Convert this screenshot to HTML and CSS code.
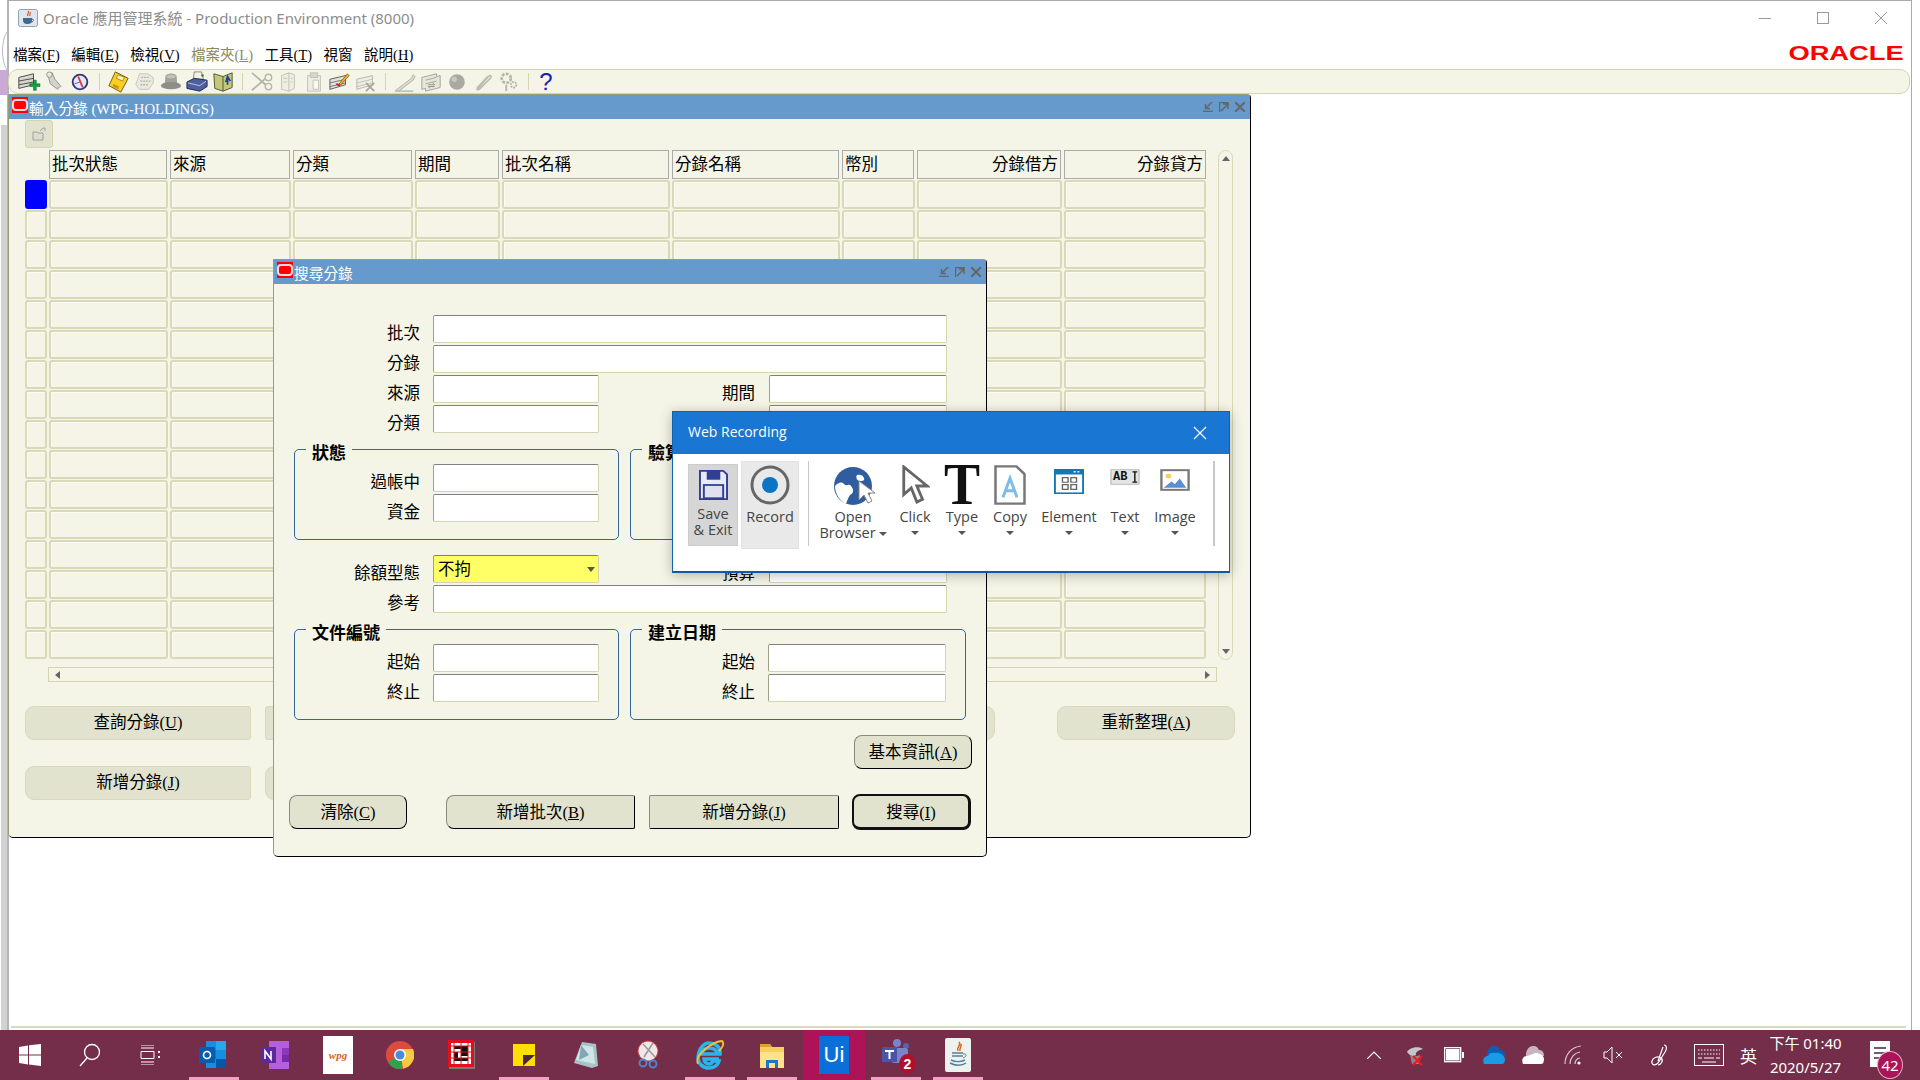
FILE: index.html
```html
<!DOCTYPE html>
<html lang="zh-Hant">
<head>
    <meta charset="UTF-8">
    <title>Oracle 應用管理系統 - Production Environment (8000)</title>
    <link rel="stylesheet" href="styles.css">
</head>
<body>
    <!-- sliver of whatever is behind the frame -->
    <svg class="behind" width="7" height="1030" viewBox="0 0 7 1030">
        <path d="M7 32C1 40 1 62 7 70" fill="none" stroke="#bbb"/>
        <rect y="70" width="7" height="25" fill="#c9aad6"/>
        <rect x="1" y="125" width="6" height="905" fill="#d2d2d2"/>
    </svg>

    <div class="app">
        <!-- Java frame -->
        <div class="app-title">
            <svg class="java-icon" width="20" height="18" viewBox="0 0 20 18">
                <rect x="0.5" y="0.5" width="19" height="17" rx="2" fill="#dfe6ee" stroke="#8fa3b5"/>
                <path d="M10 2c2 2-2 3 0 5M12 3c1 2-1 2 0 4" fill="none" stroke="#d9531e" stroke-width="1.2"/>
                <path d="M5 9h9v2c0 3-2 4-4.500 4S5 14 5 11z" fill="#3f6a8c"/>
                <path d="M14 10c2 0 2 3-1 3" fill="none" stroke="#3f6a8c"/>
            </svg>
            <span class="app-name">Oracle 應用管理系統 - Production Environment (8000)</span>
            <div class="win-controls">
                <svg width="12" height="12" viewBox="0 0 12 12"><path d="M0 6.500h12" stroke="#999"/></svg>
                <svg width="12" height="12" viewBox="0 0 12 12"><rect x="0.500" y="0.500" width="11" height="11" fill="none" stroke="#999"/></svg>
                <svg width="12" height="12" viewBox="0 0 12 12"><path d="M0 0l12 12M12 0L0 12" stroke="#999"/></svg>
            </div>
        </div>

        <div class="menu-bar">
            <nav class="menu">
                <span>檔案(<u>F</u>)</span>
                <span>編輯(<u>E</u>)</span>
                <span>檢視(<u>V</u>)</span>
                <span class="menu-off">檔案夾(<u>L</u>)</span>
                <span>工具(<u>T</u>)</span>
                <span>視窗</span>
                <span>說明(<u>H</u>)</span>
            </nav>
            <span class="oracle-logo">ORACLE</span>
        </div>

        <div class="toolbar">
            <svg class="tool" viewBox="0 0 26 24"><path d="M3 7l16-4v12L3 19z" fill="#d8d8d0" stroke="#444"/><path d="M3 11l16-3M3 15l16-3" stroke="#444"/><path d="M15 14h4v-4h3v4h4v3h-4v4h-3v-4h-4z" fill="#12a23c" stroke="#0a5c22" stroke-width=".6"/></svg>
            <svg class="tool" viewBox="0 0 26 24"><path d="M6 3l5-1 3 7 6 7-3 4-8-6z" fill="#d3d3cb" stroke="#8e8e86"/><circle cx="8" cy="4" r="3" fill="#e8e8e0" stroke="#8e8e86"/><path d="M16 19l5-3" stroke="#c0c0b8" stroke-width="2"/></svg>
            <svg class="tool" viewBox="0 0 26 24"><circle cx="13" cy="12" r="8" fill="#e6e6f6" stroke="#34347c" stroke-width="2"/><path d="M11 6l5 12" stroke="#d63a3a" stroke-width="2"/><path d="M7 14l6-2" stroke="#3c6cc4"/></svg>
            <i class="tool-sep"></i>
            <svg class="tool" viewBox="0 0 26 24"><path d="M9 1l14 7-8 15L2 16z" fill="#f9cf26" stroke="#6b5200"/><path d="M12 4l7 3-2 4-7-3z" fill="#fff2b0" stroke="#6b5200" stroke-width=".6"/><path d="M7 14l6 3-1 3-6-3z" fill="#c79a10"/></svg>
            <svg class="tool" viewBox="0 0 26 24"><path d="M7 3h9l6 4v6l-5 7H7l-4-5z" fill="#e9e9df" stroke="#c4c4ba"/><path d="M9 7h8M8 11h11M8 15h9" stroke="#b2b2a8" stroke-width="1.500" stroke-dasharray="2 1"/></svg>
            <svg class="tool" viewBox="0 0 26 24"><path d="M7 5c2-3 10-3 12 0l1 11H6z" fill="#a3a39c"/><ellipse cx="13" cy="16" rx="11" ry="4" fill="#8e8e88"/><ellipse cx="13" cy="6" rx="5" ry="2" fill="#c2c2ba"/></svg>
            <svg class="tool" viewBox="0 0 26 24"><path d="M10 1h8l2 8H9z" fill="#f3f3ea" stroke="#55554d" stroke-width=".7"/><path d="M2 12l8-4 14 2v7l-8 5-14-3z" fill="#4f5f9e" stroke="#1d2550"/><path d="M3 13l13 3 7-5" fill="none" stroke="#c4cbe6"/><circle cx="19" cy="5" r="1.500" fill="#3c8c3c"/></svg>
            <svg class="tool" viewBox="0 0 26 24"><path d="M3 3l10 3 10-4v16l-10 4-9-3z" fill="#c4c874" stroke="#4e5030"/><path d="M13 6v16" stroke="#4e5030"/><path d="M16 12l2-6 3 5M18 7v8" fill="none" stroke="#1c3fa8" stroke-width="1.800"/></svg>
            <i class="tool-sep"></i>
            <svg class="tool" viewBox="0 0 26 24"><path d="M2 2l15 13M2 21L17 8" stroke="#b5b5ac" stroke-width="2"/><circle cx="20" cy="7" r="3.500" fill="none" stroke="#b5b5ac" stroke-width="1.500"/><circle cx="20" cy="17" r="3.500" fill="none" stroke="#b5b5ac" stroke-width="1.500"/></svg>
            <svg class="tool" viewBox="0 0 26 24"><path d="M6 5l8-3 6 2v15l-6 3-8-2z" fill="#eeeee3" stroke="#c0c0b6"/><path d="M14 2v20M8 8h4M8 12h4M16 8h2M16 12h2" stroke="#c0c0b6"/></svg>
            <svg class="tool" viewBox="0 0 26 24"><path d="M6 5h14v17H6z" fill="#eeeee3" stroke="#c0c0b6"/><rect x="9" y="2" width="8" height="5" fill="#d6d6cc" stroke="#c0c0b6"/><path d="M12 10h6v10h-6z" fill="#fafaf0" stroke="#c0c0b6"/></svg>
            <svg class="tool" viewBox="0 0 26 24"><path d="M2 9l17-4v10L2 20z" fill="#e2e2da" stroke="#555"/><path d="M2 13l17-4M2 17l17-4" stroke="#555" stroke-width=".8"/><path d="M12 14l9-11 2 2-9 10-3 1z" fill="#f4b024" stroke="#7d3a00" stroke-width=".7"/><path d="M9 14l4 2" stroke="#c42222" stroke-width="2"/></svg>
            <svg class="tool" viewBox="0 0 26 24"><path d="M3 9l17-4v10L3 20z" fill="#eeeee4" stroke="#b4b4aa"/><path d="M3 13l17-4M3 17l17-4" stroke="#b4b4aa" stroke-width=".8"/><path d="M13 13l9 9M22 13l-9 9" stroke="#a8a8a0" stroke-width="2"/></svg>
            <i class="tool-sep"></i>
            <svg class="tool" viewBox="0 0 26 24"><path d="M3 21l17-13 2-4 2 2-2 4L6 22z" fill="#dcdcd2" stroke="#aeaea4"/><path d="M2 22h20" stroke="#c2c2b8" stroke-width="2"/></svg>
            <svg class="tool" viewBox="0 0 26 24"><path d="M3 7l16-4v3l4-1v13L7 22v-3l-4 1z" fill="#e6e6dc" stroke="#a0a096"/><path d="M7 10l12-3M7 14l12-3" stroke="#a0a096"/><path d="M10 15h7l-2-2M17 17h-7l2 2" fill="none" stroke="#8c8c82"/></svg>
            <svg class="tool" viewBox="0 0 26 24"><circle cx="13" cy="12" r="8.500" fill="#a9a9a2"/><circle cx="10" cy="9" r="3" fill="#c9c9c2"/></svg>
            <svg class="tool" viewBox="0 0 26 24"><path d="M7 21L20 6c2-2 4 0 2 2L10 20c-2 1-3 0-2-2L19 6" transform="translate(-1 0)" fill="none" stroke="#bcbcb2" stroke-width="1.800"/></svg>
            <svg class="tool" viewBox="0 0 26 24"><circle cx="10" cy="8" r="5" fill="none" stroke="#b4b4aa" stroke-width="3" stroke-dasharray="3 1.500"/><circle cx="18" cy="15" r="3" fill="none" stroke="#b4b4aa" stroke-width="2" stroke-dasharray="2 1"/><path d="M10 15v7" stroke="#b4b4aa" stroke-width="2"/></svg>
            <i class="tool-sep"></i>
            <span class="tool help">?</span>
        </div>

        <div class="status-line"></div>
    </div>

    <!-- 輸入分錄 -->
    <section class="form-win journal-win">
        <header class="win-head">
            <span class="ora-icon"></span>
            <span class="win-title">輸入分錄 (WPG-HOLDINGS)</span>
            <div class="head-btns">
                <svg width="10" height="10" viewBox="0 0 10 10"><path d="M0 9.500h10M9 0L3 6M2.500 2v4.500H7" fill="none" stroke="#666" stroke-width="1.500"/></svg>
                <svg width="10" height="10" viewBox="0 0 10 10"><path d="M.5 10V.5H10M2 9l7-7M4 2h5v5" fill="none" stroke="#666" stroke-width="1.500"/></svg>
                <svg width="10" height="10" viewBox="0 0 10 10"><path d="M0 0l10 10M10 0L0 10" stroke="#666" stroke-width="2"/></svg>
            </div>
        </header>
        <div class="journal-body">
            <div class="folder-btn">
                <svg width="16" height="16" viewBox="0 0 16 16"><path d="M2 14V6h4l1 1h5v7zM9 5l3-3h2v3" fill="#ddddd0" stroke="#a2a298"/></svg>
            </div>
            <div class="table-wrap">
                <div class="tbl">
                    <div class="tbl-row tbl-head">
                        <b class="blank"></b><b>批次狀態</b><b>來源</b><b>分類</b><b>期間</b><b>批次名稱</b><b>分錄名稱</b><b>幣別</b><b class="num">分錄借方</b><b class="num">分錄貸方</b>
                    </div>
                    <div class="tbl-row"><i class="current"></i><i></i><i></i><i></i><i></i><i></i><i></i><i></i><i></i><i></i></div>
                    <div class="tbl-row"><i></i><i></i><i></i><i></i><i></i><i></i><i></i><i></i><i></i><i></i></div>
                    <div class="tbl-row"><i></i><i></i><i></i><i></i><i></i><i></i><i></i><i></i><i></i><i></i></div>
                    <div class="tbl-row"><i></i><i></i><i></i><i></i><i></i><i></i><i></i><i></i><i></i><i></i></div>
                    <div class="tbl-row"><i></i><i></i><i></i><i></i><i></i><i></i><i></i><i></i><i></i><i></i></div>
                    <div class="tbl-row"><i></i><i></i><i></i><i></i><i></i><i></i><i></i><i></i><i></i><i></i></div>
                    <div class="tbl-row"><i></i><i></i><i></i><i></i><i></i><i></i><i></i><i></i><i></i><i></i></div>
                    <div class="tbl-row"><i></i><i></i><i></i><i></i><i></i><i></i><i></i><i></i><i></i><i></i></div>
                    <div class="tbl-row"><i></i><i></i><i></i><i></i><i></i><i></i><i></i><i></i><i></i><i></i></div>
                    <div class="tbl-row"><i></i><i></i><i></i><i></i><i></i><i></i><i></i><i></i><i></i><i></i></div>
                    <div class="tbl-row"><i></i><i></i><i></i><i></i><i></i><i></i><i></i><i></i><i></i><i></i></div>
                    <div class="tbl-row"><i></i><i></i><i></i><i></i><i></i><i></i><i></i><i></i><i></i><i></i></div>
                    <div class="tbl-row"><i></i><i></i><i></i><i></i><i></i><i></i><i></i><i></i><i></i><i></i></div>
                    <div class="tbl-row"><i></i><i></i><i></i><i></i><i></i><i></i><i></i><i></i><i></i><i></i></div>
                    <div class="tbl-row"><i></i><i></i><i></i><i></i><i></i><i></i><i></i><i></i><i></i><i></i></div>
                    <div class="tbl-row"><i></i><i></i><i></i><i></i><i></i><i></i><i></i><i></i><i></i><i></i></div>
                </div>
                <div class="vscroll">
                    <span class="arrow-up"></span>
                    <span class="arrow-down"></span>
                </div>
            </div>
            <div class="hscroll">
                <span class="arrow-left"></span>
                <span class="arrow-right"></span>
            </div>
            <div class="journal-btns">
                <button class="flat-btn">查詢分錄(<u>U</u>)</button>
                <button class="flat-btn hidden-long"></button>
                <button class="flat-btn refresh">重新整理(<u>A</u>)</button>
            </div>
            <div class="journal-btns second">
                <button class="flat-btn">新增分錄(<u>J</u>)</button>
                <button class="flat-btn"></button>
            </div>
        </div>
    </section>

    <!-- 搜尋分錄 -->
    <section class="form-win find-win">
        <header class="win-head">
            <span class="ora-icon"></span>
            <span class="win-title">搜尋分錄</span>
            <div class="head-btns">
                <svg width="10" height="10" viewBox="0 0 10 10"><path d="M0 9.500h10M9 0L3 6M2.500 2v4.500H7" fill="none" stroke="#666" stroke-width="1.500"/></svg>
                <svg width="10" height="10" viewBox="0 0 10 10"><path d="M.5 10V.5H10M2 9l7-7M4 2h5v5" fill="none" stroke="#666" stroke-width="1.500"/></svg>
                <svg width="10" height="10" viewBox="0 0 10 10"><path d="M0 0l10 10M10 0L0 10" stroke="#666" stroke-width="2"/></svg>
            </div>
        </header>
        <div class="find-body">
            <div class="frow"><label>批次</label><span class="field long"></span></div>
            <div class="frow"><label>分錄</label><span class="field long"></span></div>
            <div class="frow"><label>來源</label><span class="field"></span><label class="right-lbl">期間</label><span class="field mid"></span></div>
            <div class="frow"><label>分類</label><span class="field"></span><label class="right-lbl"></label><span class="field mid"></span></div>

            <div class="groups">
                <div class="group group-l">
                    <span class="legend">狀態</span>
                    <div class="frow"><label>過帳中</label><span class="field"></span></div>
                    <div class="frow"><label>資金</label><span class="field"></span></div>
                </div>
                <div class="group group-r">
                    <span class="legend">驗算</span>
                </div>
            </div>

            <div class="frow">
                <label>餘額型態</label>
                <span class="field pick">不拘<em class="pick-arrow"></em></span>
                <label class="right-lbl">預算</label><span class="field mid"></span>
            </div>
            <div class="frow"><label>參考</label><span class="field long"></span></div>

            <div class="groups lower">
                <div class="group group-l">
                    <span class="legend">文件編號</span>
                    <div class="frow"><label>起始</label><span class="field"></span></div>
                    <div class="frow"><label>終止</label><span class="field"></span></div>
                </div>
                <div class="group group-r">
                    <span class="legend">建立日期</span>
                    <div class="frow"><label>起始</label><span class="field mid"></span></div>
                    <div class="frow"><label>終止</label><span class="field mid"></span></div>
                </div>
            </div>

            <div class="btn-line end">
                <button class="form-btn info-btn">基本資訊(<u>A</u>)</button>
            </div>
            <div class="btn-line actions">
                <button class="form-btn clear-btn">清除(<u>C</u>)</button>
                <button class="form-btn new-btn">新增批次(<u>B</u>)</button>
                <button class="form-btn new-btn entry">新增分錄(<u>J</u>)</button>
                <button class="form-btn find-btn">搜尋(<u>I</u>)</button>
            </div>
        </div>
    </section>

    <!-- UiPath recorder -->
    <section class="recorder">
        <header class="rec-head">
            <span class="rec-title">Web Recording</span>
            <svg width="14" height="14" viewBox="0 0 14 14"><path d="M1 1l12 12M13 1L1 13" stroke="#fff" stroke-width="1.200"/></svg>
        </header>
        <div class="rec-body">
            <div class="rec-btn save">
                <svg width="29" height="30" viewBox="0 0 30 34" preserveAspectRatio="none"><path d="M1 1h24l4 4v28H1z" fill="#e8eaf4" stroke="#2f3f94" stroke-width="2"/><rect x="8" y="1" width="14" height="10" fill="#2f3f94"/><rect x="5" y="17" width="20" height="15" fill="#dfe2ee" stroke="#2f3f94" stroke-width="2"/></svg>
                <span>Save<br>&amp; Exit</span>
            </div>
            <div class="rec-btn record">
                <svg width="40" height="40" viewBox="0 0 40 40"><circle cx="20" cy="20" r="18" fill="none" stroke="#666" stroke-width="3"/><circle cx="20" cy="20" r="8" fill="#0b74c4"/></svg>
                <span>Record</span>
            </div>
            <i class="rec-sep"></i>
            <div class="rec-item open">
                <svg width="44" height="42" viewBox="0 0 44 42"><circle cx="20" cy="21" r="19" fill="#2f5d9f"/><path d="M2 21c3-3 6-5 9-2s4-1 7 2 3 7-1 9c-2 3-3 6-4 9-6-3-11-10-11-18zM24 10c3-1 6 0 7 3s-2 3-4 3-5-3-3-6z" fill="#fff"/><path d="M26 16v19l5-5 4 8 4-2-4-8h7z" fill="#fff" stroke="#888"/></svg>
                <span>Open<br>Browser<em class="inline-caret"></em></span>
            </div>
            <div class="rec-item click">
                <svg width="30" height="40" viewBox="0 0 32 42" preserveAspectRatio="none"><path d="M4 2v29l8-7 6 15 6-3-6-14h11z" fill="#fff" stroke="#666" stroke-width="3"/></svg>
                <span>Click</span><em class="caret"></em>
            </div>
            <div class="rec-item type">
                <span class="big-t">T</span>
                <span>Type</span><em class="caret"></em>
            </div>
            <div class="rec-item copy">
                <svg width="32" height="40" viewBox="0 0 32 42" preserveAspectRatio="none"><path d="M1.500 1.500h21l8 8v31h-29z" fill="#fff" stroke="#777" stroke-width="2.500"/><path d="M9 34l7-20 7 20M11.500 27h9" fill="none" stroke="#7cbce6" stroke-width="3"/></svg>
                <span>Copy</span><em class="caret"></em>
            </div>
            <div class="rec-item element">
                <svg width="30" height="25" viewBox="0 0 32 32" preserveAspectRatio="none"><rect width="32" height="32" fill="#1277b8"/><rect x="2" y="7" width="28" height="23" fill="#fff"/><path d="M21 3.500h2M25 3.500h2" stroke="#fff" stroke-width="2"/><path d="M9 11h6v6H9zM18 11h6v6h-6zM9 20h6v6H9zM18 20h6v6h-6z" fill="none" stroke="#666" stroke-width="1.500"/></svg>
                <span>Element</span><em class="caret"></em>
            </div>
            <div class="rec-item text-item">
                <svg width="30" height="16" viewBox="0 0 32 22" preserveAspectRatio="none"><rect x="1" y="1" width="30" height="20" fill="#e4e4e4" stroke="#aaa"/><path d="M24 4h5M24 18h5M26.500 4v14" stroke="#111" stroke-width="1.500"/></svg>
                <span class="ab-label">AB</span>
                <span>Text</span><em class="caret"></em>
            </div>
            <div class="rec-item image-item">
                <svg width="30" height="22" viewBox="0 0 32 28" preserveAspectRatio="none"><rect x="1.500" y="1.500" width="29" height="25" fill="#fff" stroke="#777" stroke-width="2.500"/><circle cx="9" cy="9" r="3" fill="#f0d060"/><path d="M4 24l8-8 4 3 5-7 7 12z" fill="#5b8fcf"/></svg>
                <span>Image</span><em class="caret"></em>
            </div>
            <i class="rec-sep last"></i>
        </div>
    </section>

    <footer class="taskbar">
        <div class="task-apps">
            <span class="task-slot sys"><svg width="22" height="22" viewBox="0 0 22 22"><path d="M0 3l9-1.500v9H0zM10 1.300L22 0v10.500H10zM0 11.500h9v9L0 19zM10 11.500h12V22l-12-1.500z" fill="#fff"/></svg></span>
            <span class="task-slot sys"><svg width="22" height="24" viewBox="0 0 22 24"><circle cx="13" cy="9" r="7.500" fill="none" stroke="#fff" stroke-width="1.300"/><path d="M8 15L1 23" stroke="#fff" stroke-width="1.300"/></svg></span>
            <span class="task-slot sys"><svg width="20" height="20" viewBox="0 0 20 20"><path d="M1 0h13M1 3h13M1 6.500h13v7H1zM1 17h13M1 20h13" fill="none" stroke="#fff"/><path d="M18 6h2v2h-2zM18 11h2v2h-2z" fill="#fff"/></svg></span>
            <span class="task-slot on app-gap"><svg width="30" height="30" viewBox="0 0 30 30"><rect x="7" y="1" width="20" height="27" fill="#1490df"/><rect x="17" y="1" width="10" height="9" fill="#28a8ea"/><rect x="7" y="10" width="10" height="9" fill="#0078d4"/><rect x="17" y="19" width="10" height="9" fill="#0358a7"/><rect x="0" y="7" width="16" height="16" rx="1" fill="#0a5ab0"/><circle cx="8" cy="15" r="3.500" fill="none" stroke="#fff" stroke-width="1.600"/></svg></span>
            <span class="task-slot"><svg width="30" height="30" viewBox="0 0 30 30"><rect x="8" y="1" width="20" height="28" fill="#b65fdc"/><rect x="21" y="8" width="7" height="7" fill="#8a39b8"/><rect x="21" y="15" width="7" height="7" fill="#7a2aa8"/><rect x="0" y="7" width="15" height="16" fill="#5b2aa0"/><path d="M4 19v-8l6 8v-8" fill="none" stroke="#fff" stroke-width="1.600"/></svg></span>
            <span class="task-slot"><span class="wpg-logo">wpg</span></span>
            <span class="task-slot"><svg width="28" height="28" viewBox="0 0 28 28"><circle cx="14" cy="14" r="14" fill="#dd4b3e"/><path d="M14 14L2 21a14 14 0 0 0 14 7z" fill="#2fa24f"/><path d="M14 8h13a14 14 0 0 1-10 19.700z" fill="#f7c93e"/><circle cx="14" cy="14" r="6" fill="#fff"/><circle cx="14" cy="14" r="4.500" fill="#4a89dc"/></svg></span>
            <span class="task-slot"><svg width="28" height="30" viewBox="0 0 28 30"><rect x="1" y="2" width="26" height="27" fill="#7a7a7a"/><rect width="26" height="27" fill="#e0101c"/><path d="M3 3h20v21H3z" fill="#fff"/><path d="M6 6h14v3H6zM13 9h7v7h-7zM6 12h4v9H6zM10 18h10v3H10z" fill="#111"/><path d="M0 6h26M0 12h26M0 18h26M6 0v27M13 0v27M20 0v27" stroke="#e0101c"/></svg></span>
            <span class="task-slot on"><svg width="24" height="26" viewBox="0 0 24 26"><path d="M1 2h22v22H1z" fill="#ffdf00"/><path d="M11 24V13h12z" fill="#4a2640"/></svg></span>
            <span class="task-slot"><svg width="28" height="30" viewBox="0 0 28 30"><path d="M10 2l14 2 2 22-6 2L2 23z" fill="#a6c4c8"/><path d="M9 5l12 2 2 17L4 20z" fill="#d0e6e6"/><path d="M9 5l8 10-10 5z" fill="#7fa8b4"/></svg></span>
            <span class="task-slot"><svg width="30" height="30" viewBox="0 0 30 30"><ellipse cx="15" cy="11" rx="10" ry="10" transform="rotate(30 15 11)" fill="#f3e6e6" stroke="#c23a3a"/><path d="M10 4l12 13M20 3L11 17" stroke="#999" stroke-width="1.500"/><circle cx="10" cy="23" r="3.500" fill="none" stroke="#4c86c8" stroke-width="2"/><circle cx="20" cy="24" r="3.500" fill="none" stroke="#4c86c8" stroke-width="2"/></svg></span>
            <span class="task-slot on"><svg width="30" height="30" viewBox="0 0 30 30"><path d="M6 14a9 9 0 0 1 17 0zM3 14h22c1-8-6-11-11-11S4 8 3 17c0 7 5 11 11 11 5 0 9-3 10-7h-6c-1 2-2 3-4 3s-5-2-5-5h15" fill="none" stroke="#29b6e8" stroke-width="3.500"/><path d="M3 24C-1 15 17 2 27 1c3 3-1 8-3 10" fill="none" stroke="#f2c230" stroke-width="1.800"/></svg></span>
            <span class="task-slot on"><svg width="28" height="28" viewBox="0 0 28 28"><path d="M2 3h10l2 3h12v21H2z" fill="#f8cf5c"/><path d="M2 3h10l2 3H2z" fill="#e0a12c"/><rect x="2" y="11" width="24" height="16" fill="#ffe28a"/><path d="M8 27v-8h12v8h-3v-5h-6v5z" fill="#1a77c4"/></svg></span>
            <span class="task-slot active"><span class="ui-logo">Ui</span></span>
            <span class="task-slot on teams"><svg width="30" height="34" viewBox="0 0 30 34"><circle cx="16" cy="5" r="4" fill="#7b83c9"/><circle cx="25" cy="8" r="3" fill="#5b63ac"/><rect x="10" y="10" width="17" height="15" rx="3" fill="#7b83c9"/><rect x="1" y="9" width="15" height="15" fill="#4c54a8"/><path d="M4 13h9M8.500 13v8" stroke="#fff" stroke-width="2"/></svg><span class="teams-badge">2</span></span>
            <span class="task-slot on"><svg width="30" height="36" viewBox="0 0 30 36"><rect x="2" y="1" width="26" height="34" rx="2" fill="#eef2ee"/><path d="M16 5c3 3-3 5-1 9M18 7c1 3-2 4-1 7" fill="none" stroke="#d9651e" stroke-width="1.500"/><path d="M9 16h11M9 19h11M8 23c4 2 10 2 14 0M7 26c5 3 12 3 16 0" stroke="#577e9c" stroke-width="1.500" fill="none"/><path d="M20 17c4-1 4 3 0 4" fill="none" stroke="#577e9c"/></svg></span>
        </div>
        <div class="tray">
            <svg class="t-chev" width="14" height="8" viewBox="0 0 14 8"><path d="M0 8l7-7 7 7" fill="none" stroke="#fff" stroke-width="1.200"/></svg>
            <svg class="t-a" width="20" height="22" viewBox="0 0 20 22"><path d="M2 8c3-5 12-6 16-3-4 1-8 3-7 6-3 2-6 1-9-3z" fill="#c6c6c6"/><path d="M5 11c4 2 8 1 10 0l-1 9H7z" fill="#888"/><path d="M8 12l9 9M17 12l-9 9" stroke="#e02020" stroke-width="2.200"/></svg>
            <svg class="t-b" width="20" height="16" viewBox="0 0 20 16"><rect x=".7" y=".7" width="16" height="14" fill="#4a2640" stroke="#fff" stroke-width="1.300"/><rect x="2" y="2" width="13.500" height="11.500" fill="#fff"/><rect x="18" y="5" width="2" height="6" fill="#fff"/></svg>
            <svg class="t-c" width="22" height="20" viewBox="0 0 22 20"><path d="M4 10c0-5 3-9 7-9 3 0 5 2 6 4 3 0 5 2 5 6H4z" fill="#0a5fb4"/><path d="M1 19c-2-4 0-8 4-8 1-3 5-4 8-3 2-1 8 1 9 6 0 3-1 5-3 5z" fill="#1a9be8"/></svg>
            <svg class="t-d" width="22" height="20" viewBox="0 0 22 20"><path d="M4 10c0-5 3-9 7-9 4 0 5 2 6 4 3 0 5 2 5 6H4z" fill="#c9b4bf"/><path d="M1 19c-2-4 0-8 4-8 4-1 6-2 8-3 4 0 9 2 9 6 0 3-1 5-3 5z" fill="#fff"/></svg>
            <svg class="t-e" width="20" height="20" viewBox="0 0 20 20"><path d="M1 19C1 9 8 2 17 1M6 19c0-6 4-11 10-12M11 19c0-3 2-6 5-6" fill="none" stroke="#d8c8d0" stroke-width="1.200"/><circle cx="15" cy="18" r="1.600" fill="#fff"/></svg>
            <svg class="t-f" width="20" height="18" viewBox="0 0 20 18"><path d="M1 6h3l5-5v16l-5-5H1z" fill="none" stroke="#fff"/><path d="M13 6l6 6M19 6l-6 6" stroke="#fff"/></svg>
            <svg class="t-g" width="22" height="22" viewBox="0 0 22 22"><path d="M14 1c3 0 3 4 1 7L8 19c-3 3-7 2-6-2s6-5 9-3 0 7-3 7M13 3l-5 14" fill="none" stroke="#fff" stroke-width="1.200"/></svg>
            <svg class="t-h" width="30" height="22" viewBox="0 0 30 22"><rect x=".5" y=".5" width="29" height="21" fill="none" stroke="#fff"/><path d="M4 6h22M4 10h22" stroke="#fff" stroke-dasharray="1.500 1.500"/><path d="M4 14h4M10 14h10M22 14h4M8 18h14" stroke="#fff"/></svg>
            <span class="ime">英</span>
            <div class="clock"><span>下午 01:40</span><span>2020/5/27</span></div>
            <div class="notify">
                <svg width="20" height="26" viewBox="0 0 20 26"><rect width="20" height="26" fill="#fff"/><path d="M4 7h12M4 12h12M4 17h8" stroke="#4a2640" stroke-width="1.500"/></svg>
                <span class="notify-badge">42</span>
            </div>
        </div>
    </footer>
</body>
</html>
```

FILE: styles.css
```css
* {
    box-sizing: border-box;
}
html, body {
    margin: 0;
    height: 100%;
}
body {
    width: 1920px;
    height: 1080px;
    position: relative;
    overflow: hidden;
    display: flex;
    flex-direction: column;
    background: #fff;
    font-family: "Liberation Serif", "Noto Sans CJK TC", serif;
    font-size: 16.5px;
    color: #000;
}
u {
    text-decoration: underline;
}
.behind {
    position: absolute;
    left: 0;
    top: 0;
}

/* frame */
.app {
    flex: 1;
    margin-left: 7px;
    width: 1905px;
    display: flex;
    flex-direction: column;
    border-left: 2px solid #b4b4b4;
    border-right: 1px solid #aaa;
    border-top: 1px solid #aaa;
}
.app-title {
    height: 34px;
    display: flex;
    align-items: center;
    padding-left: 9px;
    flex-shrink: 0;
}
.java-icon {
    margin-right: 5px;
}
.app-name {
    font-family: "Noto Sans", "Noto Sans CJK TC", sans-serif;
    font-size: 15px;
    color: #8d8d8d;
    margin-top: -2px;
}
.win-controls {
    margin-left: auto;
    display: flex;
    gap: 46px;
    padding-right: 24px;
}
.menu-bar {
    height: 34px;
    display: flex;
    align-items: center;
    justify-content: space-between;
    flex-shrink: 0;
    padding: 0 7px 0 4px;
}
.menu {
    display: flex;
    gap: 11.5px;
    margin-top: 3px;
    font-size: 14.5px;
}
.menu-off {
    color: #8b8b55;
}
.oracle-logo {
    font-family: "Liberation Sans", sans-serif;
    font-weight: bold;
    font-size: 21px;
    color: #f00;
    transform: scaleX(1.3);
    transform-origin: right center;
    margin-top: 2px;
}
.toolbar {
    height: 25px;
    margin-left: -1px;
    margin-right: 1px;
    display: flex;
    align-items: center;
    flex-shrink: 0;
    padding-left: 6px;
    background: #f4f5e6;
    border: 1px solid #d2d5ae;
    border-radius: 10px;
}
.tool {
    width: 26px;
    height: 22px;
    flex-shrink: 0;
}
.tool-sep {
    width: 1px;
    height: 17px;
    margin: 0 6px;
    background: #d2d5ae;
}
.help {
    font: 24px "Liberation Sans", sans-serif;
    line-height: 22px;
    color: #1c1cb0;
    text-align: center;
    margin-left: -2px;
}
.status-line {
    margin-top: auto;
    margin-bottom: 2px;
    height: 2px;
    background: #d9dbbc;
    margin-left: 2px;
    margin-right: 5px;
}

/* forms windows */
.form-win {
    position: absolute;
    background: #f4f5e6;
    border-left: 1px solid #9b9c70;
    border-top: 1px solid #9b9c70;
    border-right: 1px solid #000;
    border-bottom: 1px solid #000;
    border-radius: 0 4px 5px 5px;
}
.journal-win {
    left: 8px;
    top: 94px;
    width: 1243px;
    height: 744px;
}
.find-win {
    left: 273px;
    top: 259px;
    width: 714px;
    height: 598px;
}
.win-head {
    height: 24px;
    display: flex;
    align-items: center;
    background: #6699cc;
    padding-left: 3px;
}
.ora-icon {
    width: 16px;
    height: 16px;
    margin-top: -4px;
    margin-right: 1px;
    background: #f00;
    display: flex;
    align-items: center;
    justify-content: center;
    flex-shrink: 0;
}
.ora-icon::after {
    content: "";
    width: 13px;
    height: 8px;
    border: 2px solid #fbd6d6;
    border-radius: 4px;
}
.win-title {
    color: #fff;
    font-size: 14.7px;
    white-space: nowrap;
}
.head-btns {
    margin-left: auto;
    display: flex;
    gap: 6px;
    padding-right: 5px;
}
.journal-body {
    padding: 1px 0 0 16px;
}
.folder-btn {
    width: 28px;
    height: 28px;
    display: flex;
    align-items: center;
    justify-content: center;
    background: #e2e3cf;
    border: 1px solid #d2d5ae;
    border-radius: 3px;
    margin-bottom: 2px;
}
.table-wrap {
    display: flex;
}
.tbl {
    width: 1181px;
}
.tbl-row {
    display: grid;
    grid-template-columns: 24px 121px 123px 122px 87px 170px 170px 75px 147px 142px;
    height: 30px;
}
.tbl-row i {
    display: block;
    height: 29px;
    margin-right: 2px;
    background: #f4f5e6;
    border: 2px solid #d7d9b8;
    border-radius: 3px;
    box-shadow: inset 1px 1px 0 #fbfbf2;
}
.tbl-row i:last-child,
.tbl-row b:last-child {
    margin-right: 0;
}
.tbl-row i.current {
    background: #00f;
    border-color: #00f;
    box-shadow: none;
}
.tbl-head {
    height: 30px;
}
.tbl-head b {
    font-weight: normal;
    height: 29px;
    margin-right: 3px;
    padding: 0 2px;
    line-height: 27px;
    border: 1px solid #aaa;
    white-space: nowrap;
}
.tbl-head b.blank {
    border: 0;
}
.tbl-head b.num {
    text-align: right;
}
.vscroll {
    width: 15px;
    margin-left: 12px;
    height: 510px;
    border: 1px solid #d7d9b8;
    border-radius: 8px;
    display: flex;
    flex-direction: column;
    justify-content: space-between;
    align-items: center;
    padding: 5px 0;
}
.arrow-up, .arrow-down, .arrow-left, .arrow-right {
    width: 0;
    height: 0;
    border: 4px solid transparent;
}
.arrow-up {
    border-bottom: 5px solid #666;
    border-top: 0;
}
.arrow-down {
    border-top: 5px solid #666;
    border-bottom: 0;
}
.hscroll {
    margin-left: 23px;
    margin-top: 7px;
    width: 1169px;
    height: 15px;
    border: 1px solid #d2d5ae;
    display: flex;
    align-items: center;
    justify-content: space-between;
    padding: 0 6px;
}
.arrow-left {
    border-right: 5px solid #666;
    border-left: 0;
}
.arrow-right {
    border-left: 5px solid #666;
    border-right: 0;
}
.journal-btns {
    display: flex;
    margin-top: 24px;
    gap: 14px;
}
.journal-btns.second {
    margin-top: 26px;
}
.flat-btn {
    width: 226px;
    height: 34px;
    font: inherit;
    color: #000;
    padding: 0 0 4px;
    background: #e2e3cf;
    border: 1px solid #d7d9b8;
    border-radius: 9px 3px 3px 9px;
}
.hidden-long {
    width: 730px;
    border-radius: 3px 9px 9px 3px;
}
.refresh {
    width: 178px;
    margin-left: 48px;
    border-radius: 9px;
}

/* find form */
.find-body {
    padding-top: 31px;
}
.frow {
    display: flex;
    height: 28px;
    margin-bottom: 2px;
    line-height: 37px;
}
.frow label {
    width: 146px;
    margin-right: 13px;
    text-align: right;
    flex-shrink: 0;
}
.frow .right-lbl {
    width: 156px;
    margin-right: 14px;
}
.field {
    display: block;
    width: 166px;
    height: 28px;
    background: #fff;
    border: 1px solid #d2d5ae;
    border-top: 1px solid #808080;
    border-left: 1px solid #a0a088;
    border-radius: 2px;
}
.field.long {
    width: 514px;
}
.field.mid {
    width: 178px;
}
.pick {
    position: relative;
    background: #ffff66;
    padding-left: 4px;
    line-height: 28px;
}
.pick-arrow {
    position: absolute;
    right: 3px;
    top: 11px;
    border: 4px solid transparent;
    border-top: 5px solid #555;
    border-bottom: 0;
}
.groups {
    display: flex;
    gap: 11px;
    padding-left: 20px;
    margin: 16px 0 15px;
}
.group {
    position: relative;
    height: 91px;
    padding-top: 14px;
    border: 1.500px solid #336699;
    border-radius: 5px;
}
.group-l {
    width: 325px;
}
.group-r {
    width: 336px;
}
.group .frow label {
    width: 125px;
}
.group-r .frow label {
    width: 124px;
}
.legend {
    position: absolute;
    left: 11px;
    top: -5px;
    padding: 0 6px;
    background: #f4f5e6;
    font-weight: bold;
    font-size: 17px;
    line-height: 18px;
}
.btn-line {
    display: flex;
}
.btn-line.end {
    justify-content: flex-end;
    padding-right: 14px;
}
.btn-line.actions {
    margin-top: 26px;
    padding-left: 15px;
}
.form-btn {
    height: 34px;
    font: inherit;
    color: #000;
    padding: 0 0 2px;
    background: #e2e3cf;
    border: 1px solid #8a8a80;
    border-right: 1px solid #000;
    border-bottom: 1px solid #000;
    border-radius: 8px;
}
.info-btn {
    width: 118px;
}
.clear-btn {
    width: 118px;
    margin-right: 39px;
}
.new-btn {
    width: 189px;
    margin-right: 14px;
    border-radius: 8px 2px 2px 8px;
}
.new-btn.entry {
    width: 190px;
    margin-right: 13px;
    border-radius: 2px;
}
.find-btn {
    width: 119px;
    height: 36px;
    margin-top: -1px;
    border: 2px solid #111;
    border-right-width: 3px;
    border-bottom-width: 3px;
}

/* recorder */
.recorder {
    position: absolute;
    left: 672px;
    top: 411px;
    width: 558px;
    height: 162px;
    background: #fff;
    border: 1px solid #0f62b0;
    border-bottom: 2px solid #0f5aa6;
    box-shadow: 0 2px 12px rgba(0, 0, 0, 0.28);
    font-family: "Open Sans", "Noto Sans", sans-serif;
}
.rec-head {
    height: 42px;
    background: #1976d2;
    color: #fff;
    font-size: 14px;
    display: flex;
    align-items: center;
    justify-content: space-between;
    padding: 0 22px 0 15px;
}
.rec-title {
    margin-top: -3px;
}
.rec-body {
    display: flex;
    align-items: flex-start;
    padding: 7px 0 0 15px;
    font-size: 14.5px;
    line-height: 16px;
    color: #444;
}
.rec-btn {
    text-align: center;
    display: flex;
    flex-direction: column;
    align-items: center;
}
.rec-btn.save {
    width: 50px;
    height: 82px;
    margin-top: 3px;
    padding-top: 5px;
    background: #d6d6d6;
    border: 1px solid #ccc;
    gap: 6px;
}
.rec-btn.record {
    width: 58px;
    height: 88px;
    margin-left: 3px;
    padding-top: 3px;
    background: #e9e9e9;
    border: 1px solid #e2e2e2;
    gap: 4px;
}
.rec-sep {
    width: 1px;
    height: 85px;
    margin-left: 9px;
    background: #c8c8c8;
}
.rec-sep.last {
    width: 2px;
    margin-left: 10px;
}
.rec-item {
    position: relative;
    height: 88px;
    text-align: center;
    display: flex;
    flex-direction: column;
    align-items: center;
}
.rec-item svg {
    flex-shrink: 0;
}
.rec-item > span:not(.big-t):not(.ab-label) {
    position: absolute;
    top: 48px;
    left: 0;
    right: 0;
}
.caret {
    position: absolute;
    top: 70px;
    left: 50%;
    margin-left: -4px;
    border: 4px solid transparent;
    border-top: 4px solid #555;
    border-bottom: 0;
}
.inline-caret {
    display: inline-block;
    margin-left: 3px;
    vertical-align: middle;
    border: 4px solid transparent;
    border-top: 4px solid #555;
    border-bottom: 0;
}
.open {
    width: 76px;
    margin-left: 6px;
    padding-top: 4px;
}
.open svg {
    margin-left: 4px;
}
.click {
    width: 48px;
    padding-top: 4px;
}
.type {
    width: 46px;
}
.big-t {
    font: bold 60px/46px "Liberation Serif", serif;
    color: #111;
    height: 46px;
    transform: scaleX(0.9);
}
.copy {
    width: 50px;
    padding-top: 4px;
}
.element {
    width: 68px;
    padding-top: 8px;
}
.text-item {
    width: 44px;
    padding-top: 8px;
}
.ab-label {
    position: absolute;
    top: 8px;
    left: 10px;
    font: bold 12px/16px "Liberation Mono", monospace;
    color: #111;
}
.image-item {
    width: 56px;
    padding-top: 8px;
}

/* taskbar */
.taskbar {
    height: 50px;
    flex-shrink: 0;
    display: flex;
    justify-content: space-between;
    align-items: stretch;
    background: #742e49;
    color: #fff;
}
.task-apps {
    display: flex;
}
.task-slot {
    position: relative;
    width: 62px;
    flex-shrink: 0;
    display: flex;
    align-items: center;
    justify-content: center;
}
.task-slot.sys {
    width: 60px;
}
.task-slot.app-gap {
    margin-left: 3px;
}
.task-slot.on::after {
    content: "";
    position: absolute;
    left: 6px;
    right: 6px;
    bottom: 0;
    height: 3px;
    background: #f2a0c6;
}
.wpg-logo {
    width: 30px;
    height: 38px;
    background: #fff;
    color: #d0651c;
    font: italic bold 11px/38px "Liberation Serif", serif;
    text-align: center;
}
.ui-logo {
    width: 30px;
    height: 38px;
    background: #0a6fd8;
    color: #fff;
    font: 22px/38px "Liberation Sans", sans-serif;
    text-align: center;
}
.task-slot.active {
    background: #ad1457;
}
.teams-badge {
    position: absolute;
    left: 34px;
    top: 24px;
    width: 17px;
    height: 20px;
    border-radius: 50%;
    background: #b01030;
    font: bold 14px/20px "Liberation Sans", sans-serif;
    text-align: center;
}
.tray {
    display: flex;
    align-items: center;
    position: relative;
    padding-right: 30px;
}
.tray svg {
    flex-shrink: 0;
}
.t-chev { margin-right: 24px; }
.t-a { margin-right: 19px; }
.t-b { margin-right: 19px; }
.t-c { margin-right: 17px; }
.t-d { margin-right: 20px; }
.t-e { margin-right: 19px; }
.t-f { margin-right: 27px; }
.t-g { margin-right: 22px; }
.t-h { margin-right: 16px; }
.ime {
    font-family: "Noto Sans CJK TC", sans-serif;
    font-size: 17px;
    margin-right: 5px;
}
.clock {
    display: flex;
    flex-direction: column;
    align-items: center;
    gap: 4px;
    font-family: "Noto Sans", "Noto Sans CJK TC", sans-serif;
    font-size: 15px;
    line-height: 20px;
    width: 87px;
    margin-right: 21px;
}
.notify {
    position: relative;
    width: 20px;
    height: 26px;
    margin-top: -2px;
}
.notify-badge {
    position: absolute;
    left: 7px;
    top: 10px;
    width: 26px;
    height: 28px;
    border-radius: 50%;
    background: #ad1457;
    border: 1px solid #e0b0c4;
    font: 15px/26px "Noto Sans", sans-serif;
    text-align: center;
}
```
